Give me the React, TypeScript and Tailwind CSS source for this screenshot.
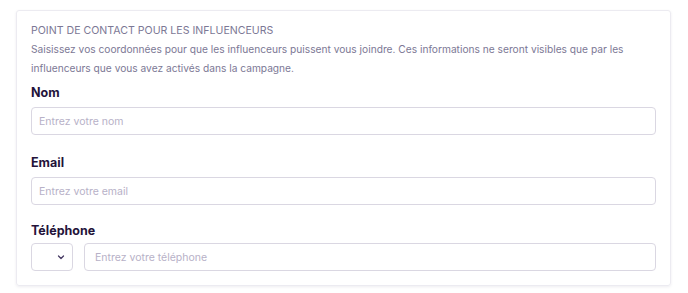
import React from 'react';

function Field({ label, placeholder }: { label: string; placeholder: string }) {
  return (
    <div className="flex flex-col">
      <label className="text-[12.5px] font-bold leading-[20px] text-[#24133a]">{label}</label>
      <input
        placeholder={placeholder}
        className="mt-[4px] h-[28px] w-full rounded-[4px] border border-[#dad7e2] px-[7px] text-[10.5px] text-[#24133a] placeholder:text-[#b7b1c7] outline-none"
      />
    </div>
  );
}

export default function App() {
  return (
    <div className="h-[293px] w-[688px] bg-white pl-[16px] pt-[10px]" style={{ fontFamily: 'Inter, "Noto Sans", sans-serif' }}>
      <div className="flex w-[655px] flex-col rounded-[3px] border border-[#ecebf1] px-[14px] pb-[14px] pt-[11px] shadow-[0_1px_3px_rgba(40,30,80,0.08)]">
        {/* En-tête */}
        <p className="text-[10.6px] uppercase leading-[18px] text-[#7c7895]">Point de contact pour les influenceurs</p>
        <p className="text-[10.2px] leading-[19px] text-[#7c7895]">
          Saisissez vos coordonnées pour que les influenceurs puissent vous joindre. Ces informations ne seront visibles que par les influenceurs que vous avez activés dans la campagne.
        </p>

        <div className="mt-[5px] flex flex-col gap-[18px]">
          <Field label="Nom" placeholder="Entrez votre nom" />
          <Field label="Email" placeholder="Entrez votre email" />

          <div className="-mt-[2px] flex flex-col">
            <label className="text-[12.5px] font-bold leading-[20px] text-[#24133a]">Téléphone</label>
            <div className="mt-[2px] flex gap-[11px]">
              <button className="flex h-[28px] w-[42px] items-center justify-end rounded-[4px] border border-[#dad7e2] pr-[5px]">
                <svg width="12" height="12" viewBox="0 0 24 24" fill="none">
                  <path d="M7 10l5 5 5-5" stroke="#463a63" strokeWidth="2.6" strokeLinecap="round" strokeLinejoin="round" />
                </svg>
              </button>
              <input
                placeholder="Entrez votre téléphone"
                className="h-[28px] flex-1 rounded-[4px] border border-[#dad7e2] px-[10px] text-[10.5px] text-[#24133a] placeholder:text-[#b7b1c7] outline-none"
              />
            </div>
          </div>
        </div>
      </div>
    </div>
  );
}
